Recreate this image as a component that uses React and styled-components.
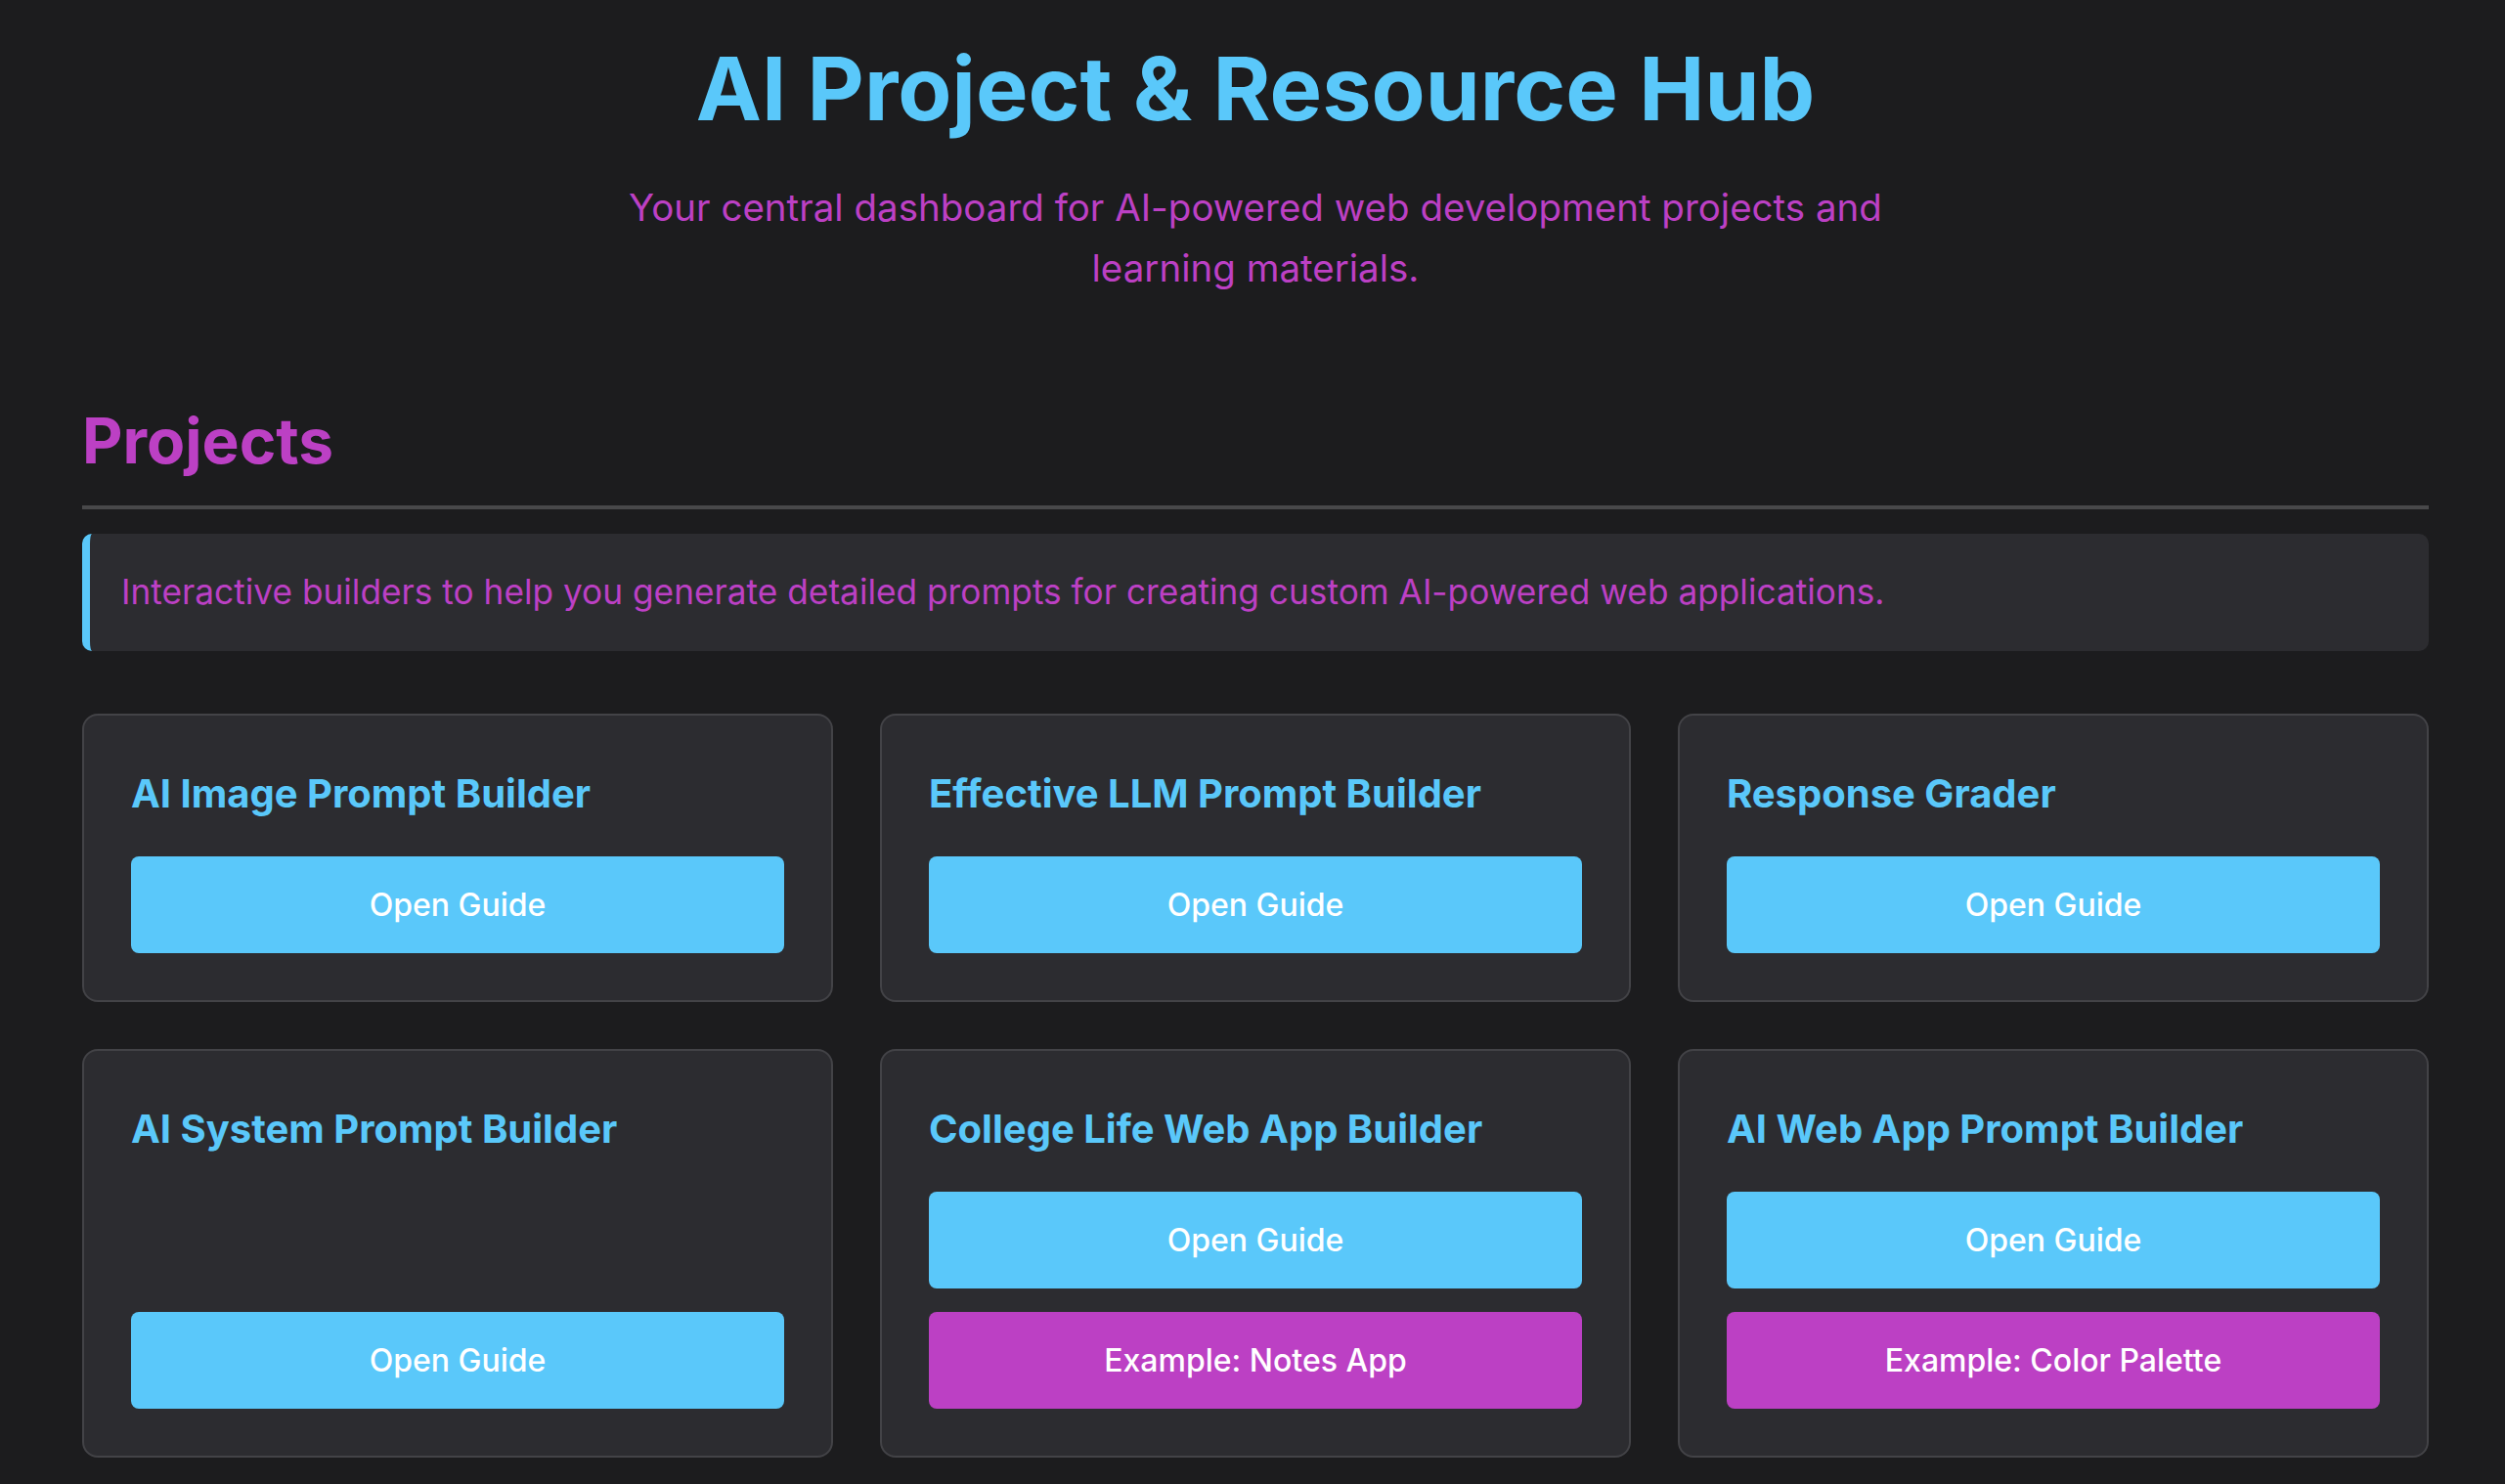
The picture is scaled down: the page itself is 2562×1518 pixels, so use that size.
import styled, { createGlobalStyle } from "styled-components";

const GlobalStyle = createGlobalStyle`
  html, body {
    margin: 0;
    padding: 0;
    background: #1c1c1e;
  }
  body {
    font-family: Inter, "Noto Sans", "Liberation Sans", sans-serif;
    color: #ffffff;
  }
  * {
    box-sizing: border-box;
  }
`;

const Page = styled.div`
  max-width: 2400px;
  margin: 0 auto;
  padding: 37px 0 60px;
  position: relative;
  left: 3px;
`;

const Header = styled.header`
  text-align: center;
`;

const Title = styled.h1`
  margin: 0 0 35px;
  font-size: 90px;
  font-weight: 700;
  line-height: 1.21;
  color: #5ac8fa;
`;

const Subtitle = styled.p`
  margin: 0 auto;
  max-width: 1320px;
  font-size: 38.5px;
  line-height: 62px;
  color: #bc40c4;
`;

const Section = styled.section`
  margin-top: 107px;
`;

const SectionTitle = styled.h2`
  margin: 0 0 25px;
  padding-bottom: 28px;
  border-bottom: 4px solid #48484a;
  font-size: 64px;
  font-weight: 700;
  line-height: 1.21;
  color: #bc40c4;
`;

const Intro = styled.p`
  margin: 0 0 64px;
  padding: 32px 32px;
  background: #2c2c30;
  border-left: 8px solid #5ac8fa;
  border-radius: 10px;
  font-size: 35.25px;
  line-height: 56px;
  color: #bc40c4;
`;

const Grid = styled.div`
  display: grid;
  grid-template-columns: repeat(3, 1fr);
  gap: 48px;
`;

const Card = styled.div`
  display: flex;
  flex-direction: column;
  padding: 50px 48px 48px;
  background: #2c2c30;
  border: 2px solid #434347;
  border-radius: 16px;
`;

const CardTitle = styled.h3`
  margin: 0 0 34px;
  font-size: 40px;
  font-weight: 700;
  line-height: 1.5;
  color: #5ac8fa;
`;

const Actions = styled.div`
  margin-top: auto;
  display: flex;
  flex-direction: column;
  gap: 24px;
`;

const Button = styled.button`
  display: block;
  width: 100%;
  padding: 31px 20px;
  border: none;
  border-radius: 8px;
  background: ${(p) => (p.$variant === "example" ? "#bc40c4" : "#5ac8fa")};
  color: #ffffff;
  font-family: inherit;
  font-size: 32px;
  font-weight: 500;
  line-height: 37px;
  text-align: center;
  cursor: pointer;
`;

const projects = [
  { title: "AI Image Prompt Builder", examples: [] },
  { title: "Effective LLM Prompt Builder", examples: [] },
  { title: "Response Grader", examples: [] },
  { title: "AI System Prompt Builder", examples: [] },
  { title: "College Life Web App Builder", examples: ["Example: Notes App"] },
  { title: "AI Web App Prompt Builder", examples: ["Example: Color Palette"] },
];

const App = () => {
  return (
    <>
      <GlobalStyle />
      <Page>
        <Header>
          <Title>AI Project &amp; Resource Hub</Title>
          <Subtitle>
            Your central dashboard for AI-powered web development projects and
            learning materials.
          </Subtitle>
        </Header>
        <Section>
          <SectionTitle>Projects</SectionTitle>
          <Intro>
            Interactive builders to help you generate detailed prompts for
            creating custom AI-powered web applications.
          </Intro>
          <Grid>
            {projects.map((p) => (
              <Card key={p.title}>
                <CardTitle>{p.title}</CardTitle>
                <Actions>
                  <Button>Open Guide</Button>
                  {p.examples.map((ex) => (
                    <Button key={ex} $variant="example">
                      {ex}
                    </Button>
                  ))}
                </Actions>
              </Card>
            ))}
          </Grid>
        </Section>
      </Page>
    </>
  );
};

export default App;
